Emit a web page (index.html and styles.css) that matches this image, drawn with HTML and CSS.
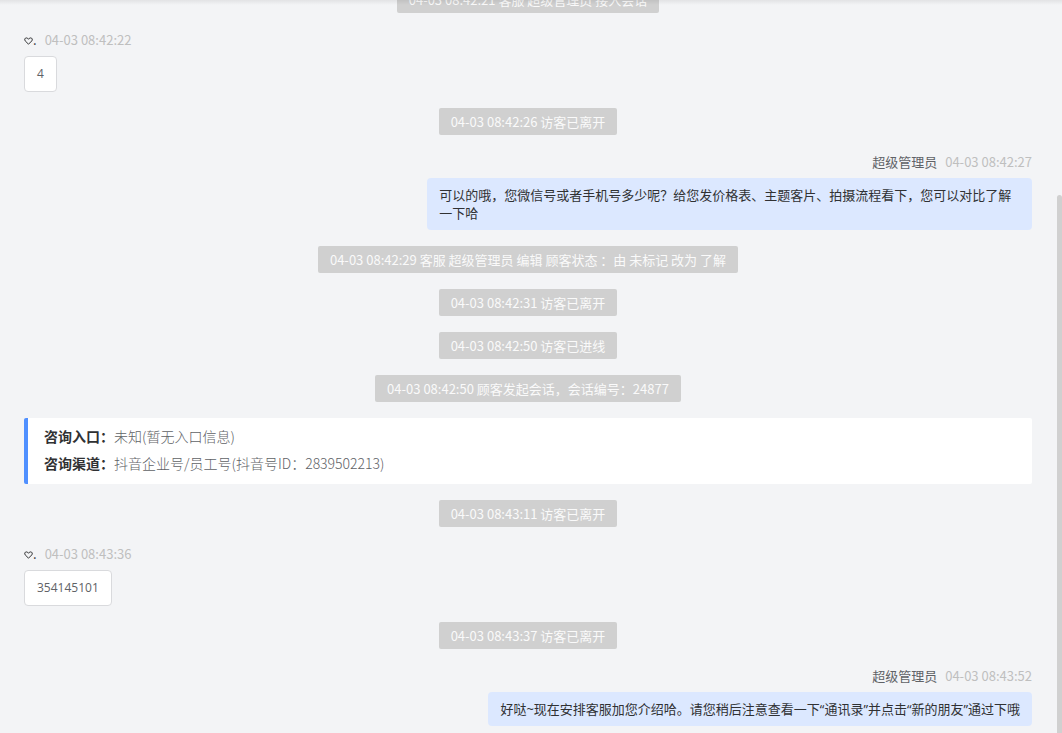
FILE: index.html
```
<!DOCTYPE html>
<html lang="zh-CN">
<head>
  <meta charset="UTF-8">
  <title>会话记录</title>
  <meta name="viewport" content="width=device-width,initial-scale=1">
  <link rel="stylesheet" href="styles.css">
</head>
<body>
  <main class="chat">
    <div class="chat-list">
      <div class="tip">04-03 08:42:21 客服 超级管理员 接入会话</div>

      <div class="msg">
        <div class="msg-head">
          <span class="nick"><svg class="heart" viewBox="0 0 9 8"><path d="M4.5 7.2L1.2 3.9C.2 2.6.8.9 2.4.9c1 0 1.7.6 2.1 1.4C4.9 1.5 5.600.9 6.600.9 8.200.9 8.800 2.600 7.800 3.900z"/></svg>.</span>
          <time>04-03 08:42:22</time>
        </div>
        <div class="bubble">4</div>
      </div>

      <div class="tip">04-03 08:42:26 访客已离开</div>

      <div class="msg msg-right">
        <div class="msg-head"><span class="name">超级管理员</span><time>04-03 08:42:27</time></div>
        <div class="bubble">可以的哦，您微信号或者手机号多少呢？给您发价格表、主题客片、拍摄流程看下，您可以对比了解一下哈</div>
      </div>

      <div class="tip">04-03 08:42:29 客服 超级管理员 编辑 顾客状态 ：由 未标记 改为 了解</div>
      <div class="tip">04-03 08:42:31 访客已离开</div>
      <div class="tip">04-03 08:42:50 访客已进线</div>
      <div class="tip">04-03 08:42:50 顾客发起会话，会话编号：24877</div>

      <div class="source">
        <p><b>咨询入口：</b>未知(暂无入口信息)</p>
        <p><b>咨询渠道：</b>抖音企业号/员工号(抖音号ID：2839502213)</p>
      </div>

      <div class="tip">04-03 08:43:11 访客已离开</div>

      <div class="msg">
        <div class="msg-head">
          <span class="nick"><svg class="heart" viewBox="0 0 9 8"><path d="M4.5 7.2L1.2 3.9C.2 2.6.8.9 2.4.9c1 0 1.7.6 2.1 1.4C4.9 1.5 5.600.9 6.600.9 8.200.9 8.800 2.600 7.800 3.900z"/></svg>.</span>
          <time>04-03 08:43:36</time>
        </div>
        <div class="bubble">354145101</div>
      </div>

      <div class="tip">04-03 08:43:37 访客已离开</div>

      <div class="msg msg-right">
        <div class="msg-head"><span class="name">超级管理员</span><time>04-03 08:43:52</time></div>
        <div class="bubble">好哒~现在安排客服加您介绍哈。请您稍后注意查看一下“通讯录”并点击“新的朋友”通过下哦</div>
      </div>
    </div>
    <div class="scroll-thumb"></div>
  </main>
</body>
</html>
```
FILE: styles.css
```
* { box-sizing: border-box; }
body { margin: 0; background: #f3f4f6; color: #606266; font-family: "Noto Sans CJK SC", sans-serif; font-size: 13px; line-height: 18px; }
p { margin: 0; }

.chat { position: relative; height: 100vh; overflow: hidden; }
/* shadow of the header above the list */
.chat::before { content: ""; position: absolute; top: 0; left: 0; right: 0; height: 5px; background: linear-gradient(#00000012, #0000); }
/* list is scrolled, first tip is partly out of view */
.chat-list { display: flex; flex-direction: column; align-items: center; gap: 16px; margin-top: -14px; padding: 0 30px 7px 24px; }

.tip { min-height: 27px; padding: 5px 12px 4px; border-radius: 2px; background: #d0d0d0; color: #fafafa; }

.msg { display: flex; flex-direction: column; align-items: flex-start; width: 100%; }
.msg-head { display: flex; gap: 8px; margin-bottom: 5px; line-height: 22px; }
.msg-head time { color: #bfbfbf; }
.nick { color: #303133; }
.heart { width: 9px; height: 8px; fill: none; stroke: #303133; stroke-width: 1; }
.bubble { max-width: 60%; padding: 8px 12px; border: 1px solid #d9dadd; border-radius: 4px; background: #fff; font-family: "Open Sans", "Noto Sans CJK SC", sans-serif; font-size: 12px; }
.msg-right { align-items: flex-end; }
.msg-right .bubble { border: 0; background: #dce8ff; color: #303133; font-size: 13px; }

.source { width: 100%; padding: 5px 16px 7px; border-left: 4px solid #5090ff; border-radius: 2px; background: #fff; font-size: 14px; line-height: 27px; font-weight: 300; }
.source b { color: #303133; font-weight: 700; }

.scroll-thumb { position: absolute; top: 195px; right: 0; bottom: 0; width: 5px; border-radius: 3px 3px 0 0; background: #d0d0d0; }
```
